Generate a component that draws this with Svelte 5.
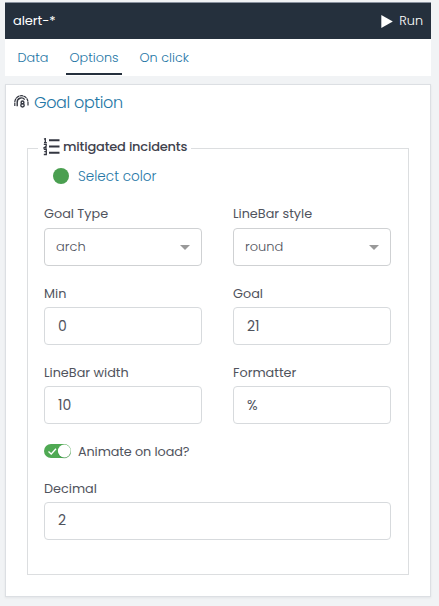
<script>
  const rows = [
    [
      { label: 'Goal Type', value: 'arch', select: true },
      { label: 'LineBar style', value: 'round', select: true }
    ],
    [
      { label: 'Min', value: '0' },
      { label: 'Goal', value: '21' }
    ],
    [
      { label: 'LineBar width', value: '10' },
      { label: 'Formatter', value: '%' }
    ]
  ];
</script>

{#snippet field(f)}
  <div class="field">
    <div class="label" class:high={f.select}><span>{f.label}</span></div>
    <div class="control" class:select={f.select}>
      <span>{f.value}</span>
      {#if f.select}
        <svg width="10" height="5" viewBox="0 0 10 5"><path d="M0 0H10L5 5Z" fill="#999" /></svg>
      {/if}
    </div>
  </div>
{/snippet}

<div class="page">
  <header>
    <span class="title">alert-*</span>
    <span class="run">
      <svg width="12" height="13" viewBox="0 0 12 13"><path d="M0.3 0L11.8 6.5L0.3 13Z" fill="#fff" /></svg>
      <span>Run</span>
    </span>
  </header>
  <nav>
    <span class="tab data">Data</span>
    <span class="tab options">Options</span>
    <span class="tab click">On click</span>
  </nav>
  <section>
    <h2>
      <svg width="15" height="14" viewBox="0 0 15 14" fill="none" stroke="#343741">
        <path d="M.8 11V7.3A6.6 6.6 0 0 1 14 7.3V10.8" stroke-width="1.2" stroke-dasharray="3.6 .4" />
        <path d="M3.2 11.3V7.5A4.2 4.2 0 0 1 10.7 4.6" stroke-width="1.4" />
        <circle cx="8.5" cy="7.4" r="1.4" stroke-width="1.4" />
        <circle cx="8.5" cy="10.3" r="1.7" stroke-width="1.4" />
      </svg>
      <span>Goal option</span>
    </h2>
    <div class="group">
      <div class="legend">
        <svg width="17" height="18" viewBox="0 0 17 18">
          <path d="M6 2.3H16.5M6 8.5H16.5M6 14.7H16.5" stroke="#343741" stroke-width="2" />
          <path d="M1 1.2L2.3 .7V4.6M1 4.6H3.8M.8 6.4H3.2V8.2L1 9.9H3.8M.8 11.4H3.3V13.7H1.3M3.3 13.7V16.5H.8" fill="none" stroke="#343741" stroke-width="1.3" />
        </svg>
        <span>mitigated incidents</span>
      </div>
      <div class="color"><i></i><span>Select color</span></div>
      {#each rows as row}
        <div class="row">
          {#each row as f}{@render field(f)}{/each}
        </div>
      {/each}
      <div class="toggle">
        <svg width="28" height="15" viewBox="0 0 28 15">
          <rect x="0" y="0" width="27" height="14" rx="7" fill="#4fa953" />
          <circle cx="20.3" cy="7.9" r="6.6" fill="#2f7d36" opacity=".35" />
          <circle cx="20.3" cy="7" r="6.4" fill="#fff" />
          <path d="M4.5 7.5L7.2 10L12 4.8" fill="none" stroke="#fff" stroke-width="1.3" />
        </svg>
        <span>Animate on load?</span>
      </div>
      {@render field({ label: 'Decimal', value: '2' })}
    </div>
  </section>
</div>

<style>
  :global(body) {
    background: #f1f3f5;
  }
  .page {
    box-sizing: border-box;
    width: 439px;
    height: 606px;
    padding: 2px 8px 0 5px;
    background: #f1f3f5;
    font-family: Poppins, Inter, 'Open Sans', sans-serif;
    font-size: 13px;
    font-weight: 400;
    color: #50535d;
    overflow: hidden;
  }
  svg {
    display: block;
    flex: none;
  }
  span {
    white-space: nowrap;
  }
  header {
    box-sizing: border-box;
    height: 37px;
    border-top: 1px solid #8b93a0;
    background: #25303d;
    color: #fff;
    display: flex;
    align-items: center;
    justify-content: space-between;
    padding: 0 8px 0 8px;
  }
  .title {
    letter-spacing: -0.1px;
  }
  .run {
    display: flex;
    align-items: center;
    gap: 6px;
    font-size: 12.8px;
    font-weight: 300;
  }
  nav {
    height: 37px;
    background: #fff;
    display: flex;
    padding-left: 9px;
  }
  .tab {
    box-sizing: border-box;
    height: 36px;
    line-height: 37px;
    font-size: 12.8px;
    font-weight: 300;
    color: #2476a5;
    padding: 0 3.5px;
    margin-right: 14px;
  }
  .data {
    width: 38px;
  }
  .options {
    width: 56px;
    border-bottom: 2px solid #25303d;
  }
  section {
    box-sizing: border-box;
    height: 513px;
    margin-top: 8px;
    border: 1px solid #dcdfe3;
    background: #fff;
    padding: 0 21px;
    box-shadow: 0 1px 2px rgba(60, 70, 80, 0.08);
  }
  h2 {
    display: flex;
    align-items: center;
    gap: 5px;
    height: 34px;
    margin: 0 0 29px -13px;
    font-size: 16px;
    font-weight: 300;
    letter-spacing: -0.33px;
    color: #2476a5;
  }
  .group {
    box-sizing: border-box;
    height: 427px;
    border: 1px solid #dcdee0;
    padding: 0 17px 0 16px;
  }
  .legend {
    box-sizing: border-box;
    display: flex;
    align-items: center;
    gap: 3px;
    width: 153px;
    height: 20px;
    margin: -12px 0 0 -6px;
    padding-left: 5px;
    background: #fff;
    font-weight: 500;
    letter-spacing: -0.2px;
    color: #3f424d;
  }
  .color {
    display: flex;
    align-items: center;
    gap: 9px;
    height: 20px;
    margin: 9px 0 0 9px;
    color: #2476a5;
    font-weight: 300;
    font-size: 13.6px;
  }
  .color span {
    line-height: 20px;
    padding-top: 1px;
  }
  .color i {
    width: 16px;
    height: 16px;
    border-radius: 50%;
    background: #4a9f50;
  }
  .row {
    display: flex;
    gap: 31px;
    height: 79.2px;
  }
  .color + .row {
    margin-top: 18px;
  }
  .field {
    flex: 1;
  }
  .label {
    height: 20px;
    line-height: 21px;
    margin-bottom: 4px;
    font-size: 12.8px;
  }
  .high {
    line-height: 19px;
  }
  .control {
    box-sizing: border-box;
    height: 38px;
    border: 1px solid #d7dadd;
    border-radius: 4px;
    display: flex;
    align-items: center;
    justify-content: space-between;
    padding: 0 11px 0 13px;
    font-size: 14px;
  }
  .select {
    font-size: 13px;
    font-weight: 300;
    padding-left: 11px;
    border-color: #cfd1d3;
  }
  .toggle {
    display: flex;
    align-items: center;
    gap: 6px;
    height: 20px;
    margin: 0 0 16px;
    font-size: 12.8px;
    letter-spacing: -0.1px;
  }
</style>
